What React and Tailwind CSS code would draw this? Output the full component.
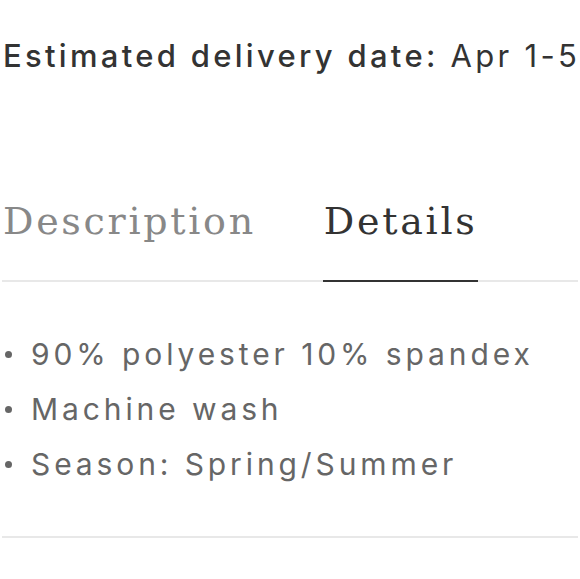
export default function App() {
  const items = ["90% polyester 10% spandex", "Machine wash", "Season: Spring/Summer"];
  return (
    <div className="w-[580px] h-[579px] bg-white overflow-hidden font-['Inter',sans-serif]">
      <p className="pl-[3px] pt-[38px] text-[31px] leading-[36px] tracking-[3.3px] text-[#333] whitespace-nowrap">
        <span className="font-medium">Estimated delivery date:</span> Apr 1-5
      </p>

      <div className="mt-[123px] mx-[2px] flex border-b-2 border-[#e8e8e8] font-['DejaVu_Serif',serif] text-[38px] leading-[48px] tracking-[2.7px]">
        <div className="pl-[1px] pb-[35px] text-[#888]">Description</div>
        <div className="ml-[68px] pb-[35px] text-[#333] relative">
          Details
          <div className="absolute left-[-1px] right-[-1px] bottom-[-2px] h-[2px] bg-[#333]" />
        </div>
      </div>

      <ul className="mt-[45px] pl-[5px] text-[30px] leading-[55px] tracking-[3.9px] text-[#666]">
        {items.map((t) => (
          <li key={t} className="flex items-center whitespace-nowrap">
            <span className="w-[7px] h-[7px] rounded-full bg-[#666] mr-[19px]" />
            {t}
          </li>
        ))}
      </ul>

      <div className="mt-[44px] mx-[2px] h-[2px] bg-[#e8e8e8]" />
    </div>
  );
}
